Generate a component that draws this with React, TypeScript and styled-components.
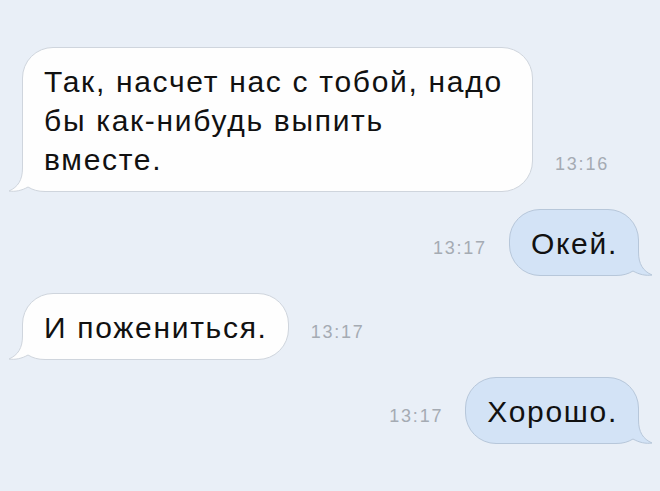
import React from "react";
import styled, { createGlobalStyle } from "styled-components";

const GlobalStyle = createGlobalStyle`
  html, body {
    margin: 0;
    padding: 0;
    background: #e9eff7;
  }
  body {
    font-family: "Liberation Sans", Arial, sans-serif;
  }
`;

const Page = styled.div`
  width: 660px;
  height: 491px;
  box-sizing: border-box;
  padding: 47px 21px 0 22px;
  display: flex;
  flex-direction: column;
  gap: 17px;
  background: #e9eff7;
  overflow: hidden;
`;

const Row = styled.div<{ $out?: boolean }>`
  display: flex;
  align-items: flex-end;
  gap: 22px;
  justify-content: ${(p) => (p.$out ? "flex-end" : "flex-start")};
`;

const Bubble = styled.div<{ $out?: boolean; $width?: number }>`
  position: relative;
  box-sizing: border-box;
  ${(p) => (p.$width ? `width: ${p.$width}px;` : "")}
  padding: 14px 20px 12px 21px;
  border-radius: 31px;
  background: ${(p) => (p.$out ? "#d3e3f6" : "#fefefe")};
  border: 1px solid ${(p) => (p.$out ? "#b7c7da" : "#cfd5dd")};
  font-size: 30px;
  line-height: 39px;
  letter-spacing: 1.7px;
  color: #111111;
  white-space: pre;
`;

const BubbleText = styled.span`
  position: relative;
  z-index: 1;
`;

const TailSvg = styled.svg<{ $out?: boolean }>`
  position: absolute;
  bottom: -1px;
  ${(p) => (p.$out ? "right: -16px; transform: scaleX(-1);" : "left: -16px;")}
  width: 50px;
  height: 32px;
  overflow: visible;
  z-index: 0;
`;

const Time = styled.div`
  font-size: 18px;
  line-height: 22px;
  letter-spacing: 1.8px;
  color: #a5abb3;
  margin-bottom: 17px;
  white-space: nowrap;
`;

function Tail({ out }: { out?: boolean }) {
  const fill = out ? "#d3e3f6" : "#fefefe";
  const stroke = out ? "#b7c7da" : "#cfd5dd";
  return (
    <TailSvg $out={out} viewBox="0 0 50 32">
      <path
        d="M15.5 0 L15.5 8 C15.5 20 11 27 2 31 C8 32 15 30.5 21 27 C26 30 31 31.5 38 31.5 L50 31.5 L50 0 Z"
        fill={fill}
      />
      <path
        d="M15.5 0 L15.5 8 C15.5 20 11 27 2 31 C8 32 15 30.5 21 27 C26 30 31 31.5 38 31.5 L50 31.5"
        fill="none"
        stroke={stroke}
        strokeWidth="1"
      />
    </TailSvg>
  );
}

type Msg = { text: string; time: string; out?: boolean; width?: number };

const messages: Msg[] = [
  {
    text: "Так, насчет нас с тобой, надо\nбы как-нибудь выпить\nвместе.",
    time: "13:16",
    width: 511,
  },
  { text: "Окей.", time: "13:17", out: true },
  { text: "И пожениться.", time: "13:17" },
  { text: "Хорошо.", time: "13:17", out: true },
];

export default function App() {
  return (
    <>
      <GlobalStyle />
      <Page>
        {messages.map((m, i) => (
          <Row key={i} $out={m.out}>
            {m.out && <Time>{m.time}</Time>}
            <Bubble $out={m.out} $width={m.width}>
              <Tail out={m.out} />
              <BubbleText>{m.text}</BubbleText>
            </Bubble>
            {!m.out && <Time>{m.time}</Time>}
          </Row>
        ))}
      </Page>
    </>
  );
}
